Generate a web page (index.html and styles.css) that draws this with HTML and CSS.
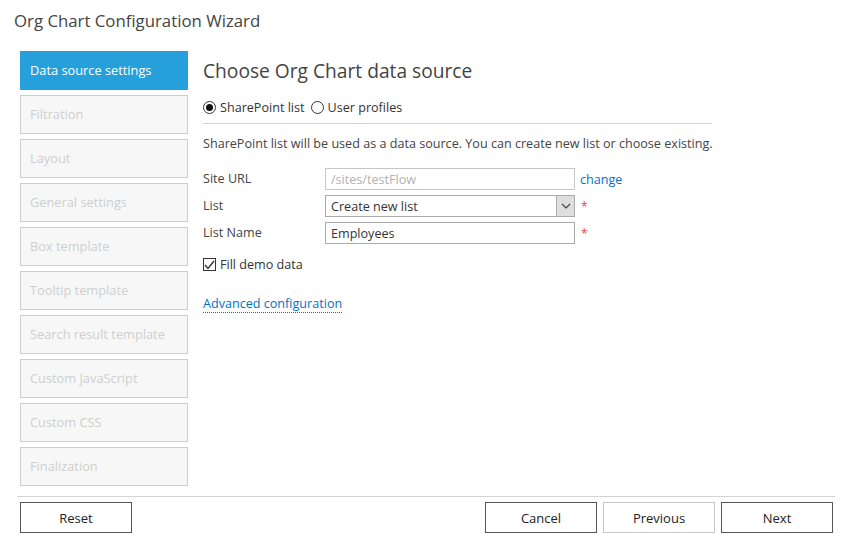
FILE: index.html
```html
<!DOCTYPE html>
<html>
<head>
<meta charset="utf-8">
<link rel="stylesheet" href="styles.css">
</head>
<body>
<div class="wizard">
  <h1 class="title">Org Chart Configuration Wizard</h1>
  <div class="main">
    <ul class="steps">
      <li class="step active">Data source settings</li>
      <li class="step">Filtration</li>
      <li class="step">Layout</li>
      <li class="step">General settings</li>
      <li class="step">Box template</li>
      <li class="step">Tooltip template</li>
      <li class="step">Search result template</li>
      <li class="step">Custom JavaScript</li>
      <li class="step">Custom CSS</li>
      <li class="step">Finalization</li>
    </ul>
    <div class="content">
      <h2 class="heading">Choose Org Chart data source</h2>
      <div class="radios">
        <label class="radio"><span class="radio-circle checked"></span>SharePoint list</label>
        <label class="radio"><span class="radio-circle"></span>User profiles</label>
      </div>
      <p class="desc">SharePoint list will be used as a data source. You can create new list or choose existing.</p>
      <div class="form">
        <div class="row">
          <span class="label">Site URL</span>
          <span class="input disabled">/sites/testFlow</span>
          <a class="link change">change</a>
        </div>
        <div class="row">
          <span class="label">List</span>
          <span class="input select"><span class="select-text">Create new list</span><span class="select-btn"><svg width="10" height="6" viewBox="0 0 10 6"><path d="M1 1 L5 5 L9 1" fill="none" stroke="#444" stroke-width="1.2"/></svg></span></span>
          <span class="req">*</span>
        </div>
        <div class="row">
          <span class="label">List Name</span>
          <span class="input">Employees</span>
          <span class="req">*</span>
        </div>
      </div>
      <label class="check"><span class="check-box"><svg width="11" height="10" viewBox="0 0 11 10"><path d="M1 5 L4 8.5 L10 1" fill="none" stroke="#333" stroke-width="1.4"/></svg></span>Fill demo data</label>
      <a class="advanced">Advanced configuration</a>
    </div>
  </div>
  <div class="footer">
    <button class="btn">Reset</button>
    <div class="footer-right">
      <button class="btn">Cancel</button>
      <button class="btn btn-light">Previous</button>
      <button class="btn">Next</button>
    </div>
  </div>
</div>
</body>
</html>
```

FILE: styles.css
```css
* { box-sizing: border-box; }
body {
  margin: 0;
  background: #fff;
  font-family: "Open Sans", "Noto Sans", sans-serif;
  font-size: 12.6px;
  color: #444;
}
.wizard {
  width: 860px;
  height: 545px;
  padding: 0;
}
.title {
  margin: 0;
  padding: 9px 0 0 14px;
  height: 51px;
  font-size: 16.8px;
  font-weight: 400;
  color: #444;
  line-height: 24px;
}
.main {
  display: flex;
  gap: 15px;
  padding-left: 20px;
  height: 440px;
}
.steps {
  list-style: none;
  margin: 0;
  padding: 0;
  width: 168px;
  display: flex;
  flex-direction: column;
  gap: 5px;
}
.step {
  height: 39px;
  padding: 0 9px 2px;
  display: flex;
  align-items: center;
  background: #f7f7f7;
  border: 1px solid #cdcdcd;
  color: #cfcfcf;
  font-size: 12.8px;
}
.step.active {
  background: #26a0da;
  border-color: #26a0da;
  color: #fff;
}
.content {
  width: 509px;
}
.heading {
  margin: 0;
  padding-top: 6px;
  font-size: 19.2px;
  font-weight: 400;
  line-height: 27px;
  color: #444;
}
.radios {
  display: flex;
  gap: 6px;
  margin-top: 13px;
  height: 20px;
  align-items: center;
  color: #333;
}
.radio {
  display: flex;
  align-items: center;
  gap: 4px;
}
.radio-circle {
  width: 13px;
  height: 13px;
  border: 1px solid #333;
  border-radius: 50%;
  display: inline-flex;
  align-items: center;
  justify-content: center;
  background: #fff;
}
.radio-circle.checked::after {
  content: "";
  width: 7px;
  height: 7px;
  border-radius: 50%;
  background: #111;
}
.desc {
  margin: 6px 0 0 0;
  border-top: 1px solid #d4d4d4;
  padding-top: 10px;
  line-height: 20px;
  color: #444;
  white-space: nowrap;
}
.form {
  margin-top: 14px;
  display: flex;
  flex-direction: column;
  gap: 5px;
}
.row {
  display: flex;
  align-items: center;
  height: 22px;
}
.label {
  width: 122px;
  color: #444;
  line-height: 20px;
  padding-bottom: 1px;
}
.input {
  width: 250px;
  height: 22px;
  border: 1px solid #ababab;
  padding: 0 5px;
  display: flex;
  align-items: center;
  color: #333;
  background: #fff;
}
.input.disabled {
  color: #b1b1b1;
  border-color: #c6c6c6;
}
.input.select {
  padding-right: 0;
  justify-content: space-between;
}
.select-btn {
  width: 18px;
  height: 20px;
  background: #dedede;
  border-left: 1px solid #ababab;
  display: flex;
  align-items: center;
  justify-content: center;
}
.link {
  color: #0072c6;
  margin-left: 5px;
}
.req {
  color: #e64b4b;
  margin-left: 6px;
  font-size: 12px;
}
.check {
  display: flex;
  align-items: center;
  gap: 4px;
  margin-top: 12px;
  color: #333;
}
.check-box {
  width: 13px;
  height: 13px;
  border: 1px solid #333;
  display: inline-flex;
  align-items: center;
  justify-content: center;
  background: #fff;
}
.advanced {
  display: inline-block;
  margin-top: 22px;
  color: #0072c6;
  border-bottom: 1px dotted #0072c6;
  line-height: 17px;
}
.footer {
  margin: 5px 25px 0 17px;
  border-top: 1px solid #d4d4d4;
  padding: 5px 0 0 3px;
  display: flex;
  justify-content: space-between;
}
.footer-right {
  display: flex;
  gap: 6px;
  margin-right: 2px;
}
.btn {
  width: 112px;
  height: 31px;
  border: 1px solid #555;
  background: #fff;
  font-family: "Open Sans", "Noto Sans", sans-serif;
  font-size: 13px;
  color: #222;
  padding: 0;
}
.btn-light {
  border-color: #c8c8c8;
}
```
